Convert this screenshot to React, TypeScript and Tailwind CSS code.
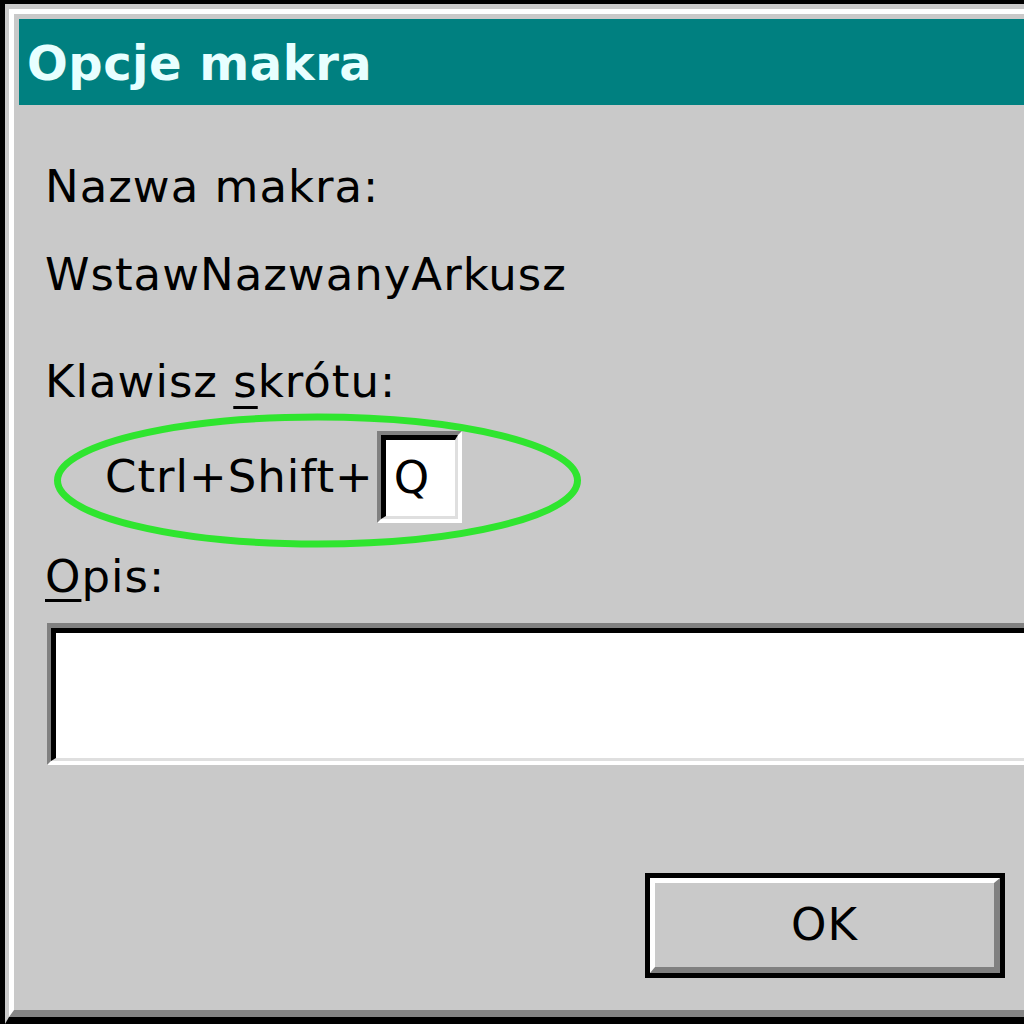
import React from "react";

const font = { fontFamily: '"DejaVu Sans", Verdana, sans-serif' };

const App = () => {
  return (
    <div
      className="relative w-[1024px] h-[1024px] overflow-hidden bg-black pt-[4px] pl-[5px] text-black"
      style={font}
    >
      {/* window frame */}
      <div className="h-full border-t-[5px] border-l-[4px] border-b-[7px] border-t-[#cacaca] border-l-[#cacaca] border-b-black bg-[#c9c9c9]">
        <div className="h-full border-t-[5px] border-l-[5px] border-b-[7px] border-t-white border-l-white border-b-[#858585] pt-[5px] pl-[5px] bg-[#c9c9c9]">
          {/* title bar */}
          <div className="h-[86px] bg-[#008080] pl-[8px] pt-[16px]">
            <div className="text-[48px] leading-[56px] font-bold tracking-[0.5px] text-[#e8ffff] font-['DejaVu_Sans',sans-serif]">
              Opcje makra
            </div>
          </div>

          {/* body */}
          <div className="flex flex-col items-start pl-[26px] text-[45px] leading-[52px] tracking-[1px]">
            <div className="mt-[56px]">Nazwa makra:</div>
            <div className="mt-[36px]">WstawNazwanyArkusz</div>
            <div className="mt-[55px]">
              Klawisz{" "}
              <span className="underline underline-offset-[9px] [text-decoration-thickness:3px]">s</span>
              krótu:
            </div>

            <div className="mt-[23px] ml-[60px] flex items-center">
              <span>Ctrl+Shift+</span>
              <div className="ml-[3px] h-[92px] w-[85px] border-t-[4px] border-l-[4px] border-b-[4px] border-r-[4px] border-t-[#808080] border-l-[#808080] border-b-white border-r-white">
                <div className="h-full w-full border-t-[5px] border-l-[5px] border-b-[3px] border-r-[3px] border-t-black border-l-black border-b-[#dfdfdf] border-r-[#dfdfdf] bg-white flex items-center pl-[8px]">
                  Q
                </div>
              </div>
            </div>

            <div className="mt-[28px]">
              <span className="underline underline-offset-[7px] [text-decoration-thickness:3px]">O</span>
              pis:
            </div>

            {/* description field */}
            <div className="mt-[20px] ml-[2px] h-[142px] w-[1000px] border-t-[5px] border-l-[4px] border-b-[4px] border-t-[#808080] border-l-[#808080] border-b-white">
              <div className="h-full w-full border-t-[5px] border-l-[5px] border-b-[3px] border-t-black border-l-black border-b-[#dfdfdf] bg-white"></div>
            </div>

            {/* OK button */}
            <div className="mt-[108px] ml-[600px] h-[105px] w-[360px] border-[5px] border-black">
              <div className="h-full w-full border-t-[5px] border-l-[5px] border-b-[6px] border-r-[6px] border-t-white border-l-white border-b-[#808080] border-r-[#808080] bg-[#c9c9c9] flex items-center justify-center">
                OK
              </div>
            </div>
          </div>
        </div>
      </div>

      {/* green annotation ring */}
      <svg
        className="absolute left-0 top-0 pointer-events-none"
        width="1024"
        height="1024"
        viewBox="0 0 1024 1024"
      >
        <ellipse cx="317.5" cy="480.5" rx="260" ry="63.5" fill="none" stroke="#2fe52f" strokeWidth="7" />
      </svg>
    </div>
  );
};

export default App;
